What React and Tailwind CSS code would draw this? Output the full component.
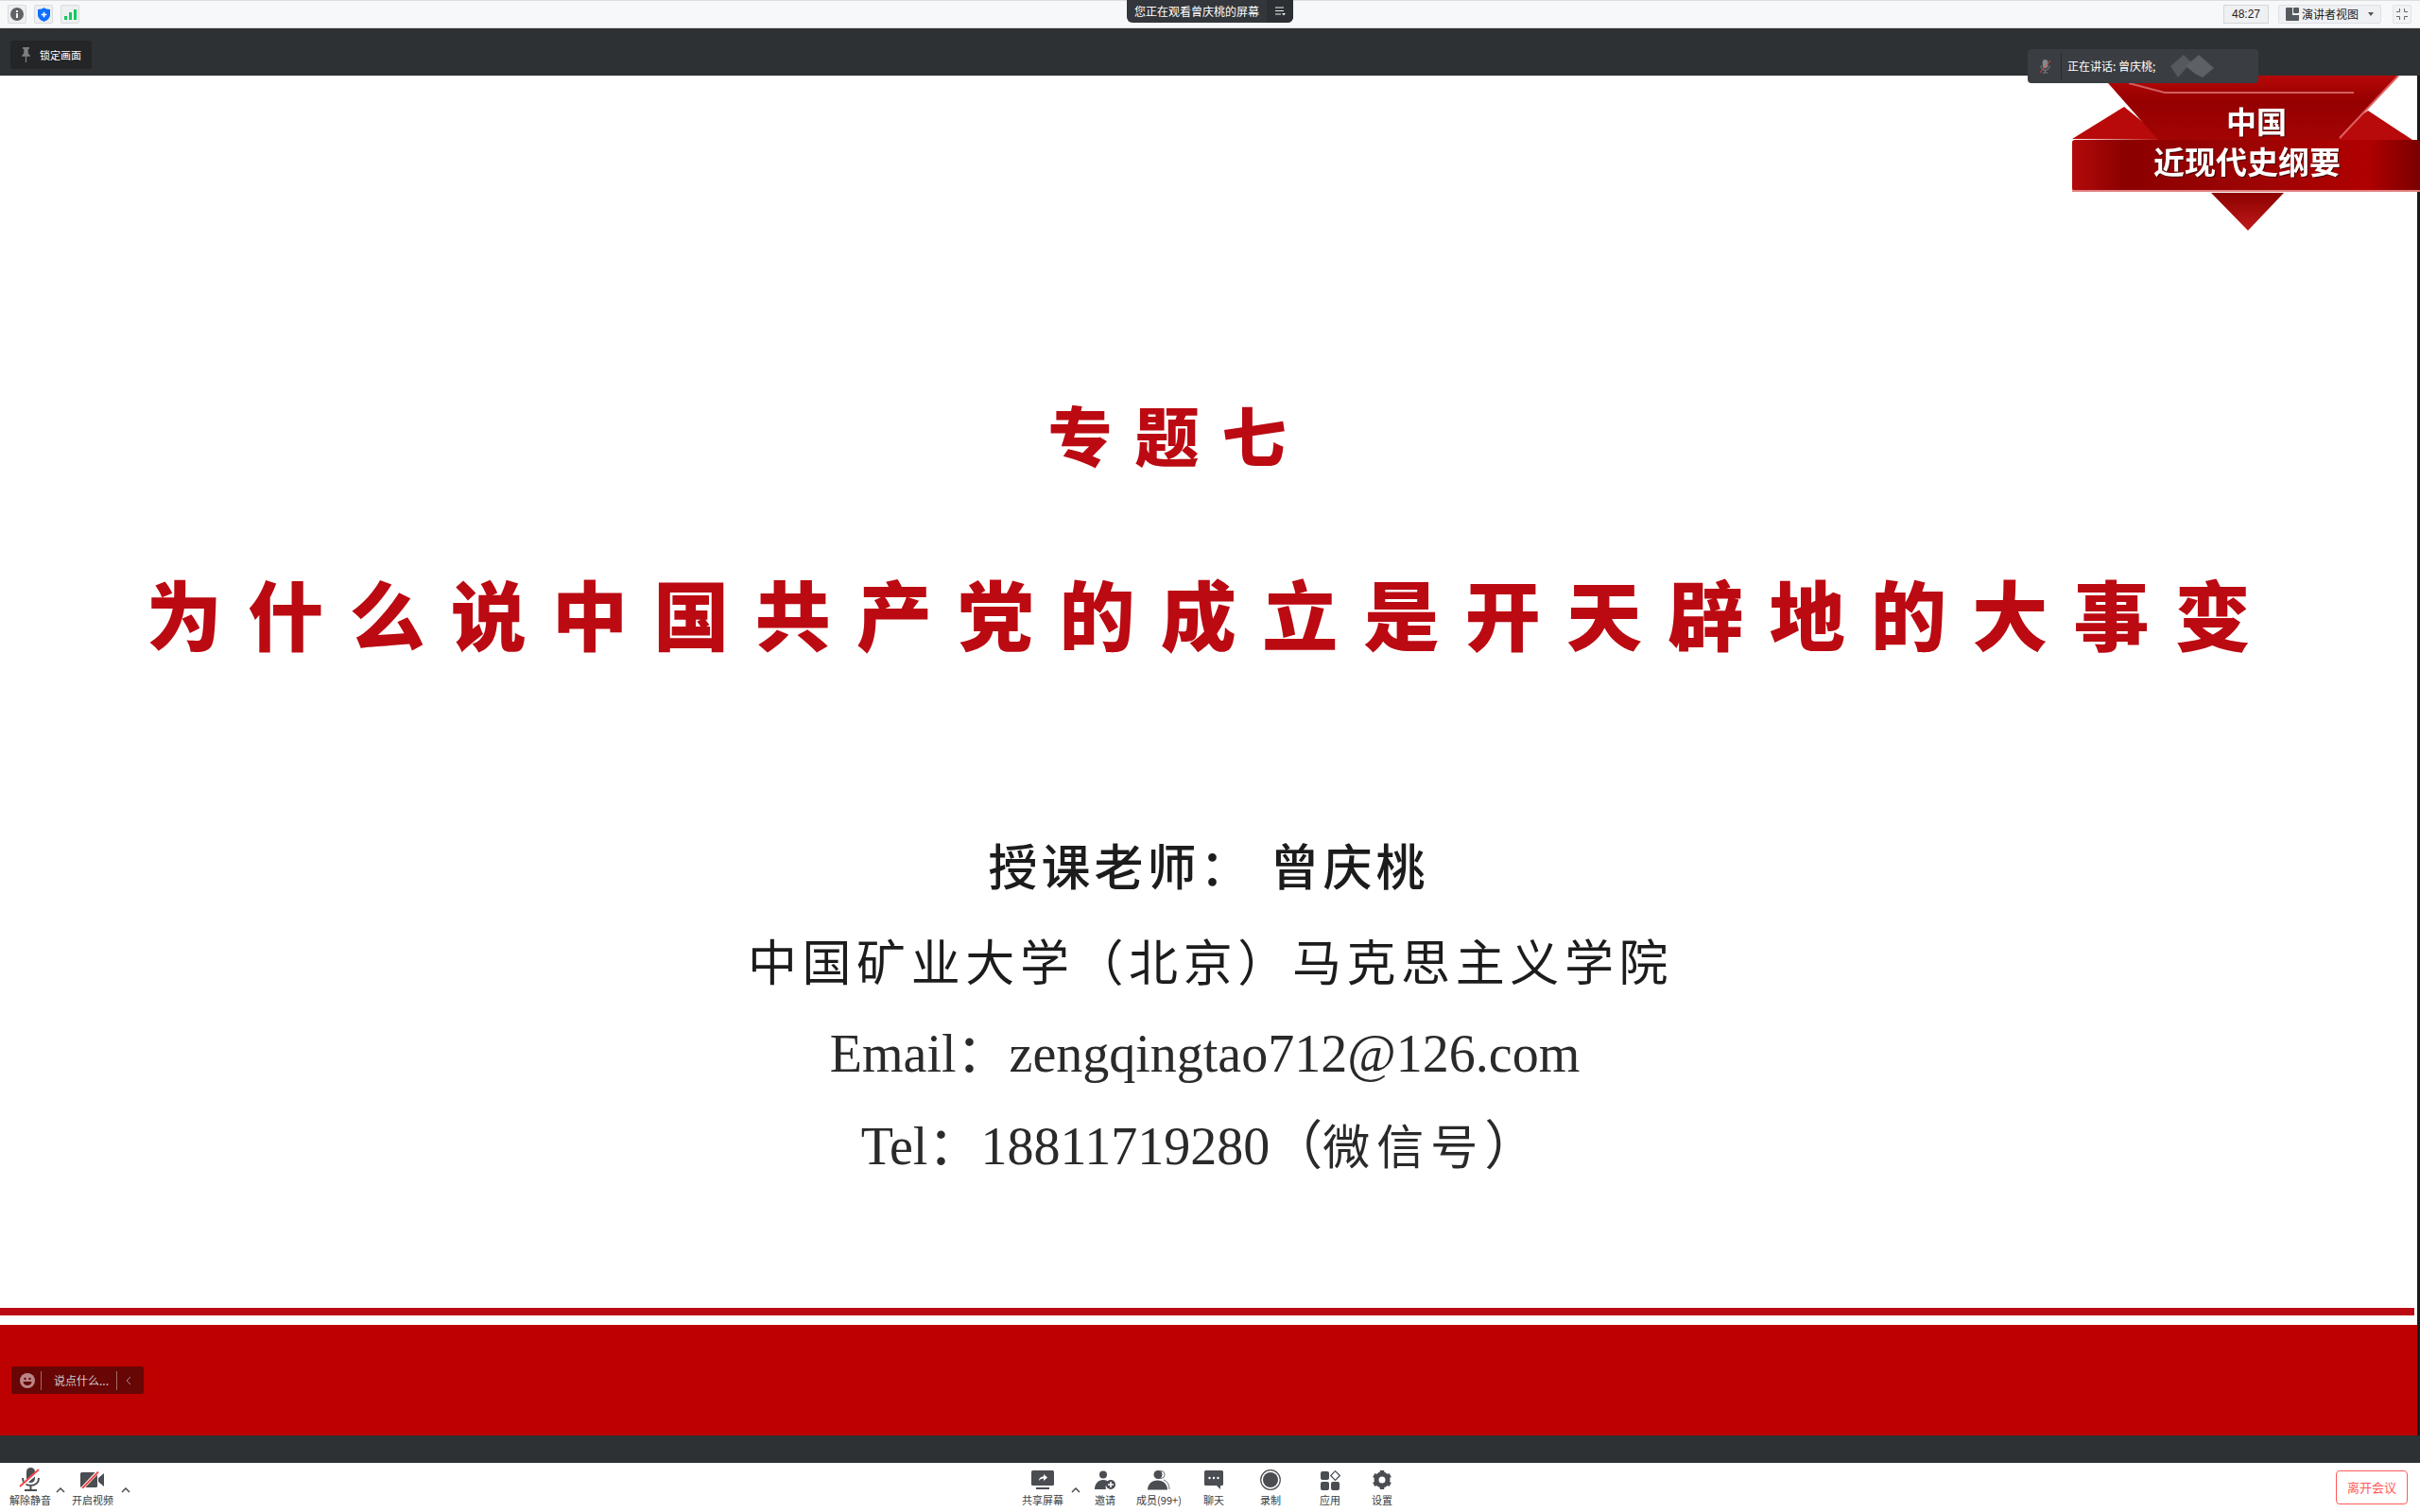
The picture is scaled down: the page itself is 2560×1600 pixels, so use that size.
import React from 'react';

const COLON = '\uFF1A';
const LP = '\uFF08';
const RP = '\uFF09';

const MicIcon = ({ className }) => (
  <svg viewBox="0 0 24 26" className={className}>
    <rect x="8" y="0" width="9" height="16" rx="4.5" fill="#4a4d52" />
    <path d="M4 11c0 5 3.5 8 8.500 8s8.500-3 8.500-8M12.500 19v4M6 24h13" stroke="#4a4d52" strokeWidth="2" fill="none" />
    <path d="M2 20 L22 3" stroke="#fff" strokeWidth="3.500" />
    <path d="M1 20 L21 2" stroke="#f24a4a" strokeWidth="2" />
  </svg>
);

const VideoIcon = ({ className }) => (
  <svg viewBox="0 0 26 18" className={className}>
    <rect x="0" y="1" width="18" height="16" rx="1.500" fill="#4a4d52" />
    <path d="M19 7l6-5v14l-6-5z" fill="#4a4d52" />
    <path d="M1 19 L19 0" stroke="#fff" strokeWidth="3.500" />
    <path d="M2 18 L19 0.500" stroke="#f24a4a" strokeWidth="2" />
  </svg>
);

const Chevron = () => (
  <svg viewBox="0 0 10 6" className="w-[10px] h-[6px]">
    <path d="M1 5l4-4 4 4" stroke="#4a4d52" strokeWidth="1.500" fill="none" />
  </svg>
);

const ShareIcon = () => (
  <svg viewBox="0 0 24 20" className="w-[24px] h-[20px]">
    <rect x="0" y="0" width="24" height="16" rx="1.500" fill="#4a4d52" />
    <rect x="5" y="18" width="14" height="2" fill="#4a4d52" />
    <path d="M8 11c0-3 2-4.500 5-4.500V4l4 3.500-4 3.500V8.500c-2 0-3.500 .7-5 2.500z" fill="#fff" />
  </svg>
);

const InviteIcon = () => (
  <svg viewBox="0 0 24 21" className="w-[24px] h-[21px]">
    <circle cx="10" cy="4.500" r="4" fill="#4a4d52" />
    <path d="M1 20c0-6 4-10 9-10 3 0 5 1 6 3-3 1-4 4-3 7z" fill="#4a4d52" />
    <circle cx="18" cy="15" r="5" fill="#4a4d52" />
    <path d="M18 12v6M15 15h6" stroke="#fff" strokeWidth="1.500" />
  </svg>
);

const MembersIcon = () => (
  <svg viewBox="0 0 24 21" className="w-[24px] h-[21px]">
    <circle cx="14" cy="4.500" r="4" fill="none" stroke="#4a4d52" strokeWidth="0.800" />
    <path d="M17 10c4 1.500 6 5 6 10" fill="none" stroke="#4a4d52" strokeWidth="0.800" />
    <circle cx="11" cy="4.500" r="4.500" fill="#4a4d52" />
    <path d="M0 20.500c0-6 4.500-10 10.500-10s10.500 4 10.500 10z" fill="#4a4d52" />
  </svg>
);

const ChatIcon = () => (
  <svg viewBox="0 0 20 20" className="w-[20px] h-[20px]">
    <path d="M1.500 0h17A1.500 1.500 0 0 1 20 1.500v13a1.500 1.500 0 0 1-1.500 1.500H17v4l-4-4H1.500A1.500 1.500 0 0 1 0 14.500v-13A1.500 1.500 0 0 1 1.500 0z" fill="#4a4d52" />
    <circle cx="5.500" cy="8" r="1.200" fill="#fff" />
    <circle cx="10" cy="8" r="1.200" fill="#fff" />
    <circle cx="14.500" cy="8" r="1.200" fill="#fff" />
  </svg>
);

const RecordIcon = () => (
  <svg viewBox="0 0 22 22" className="w-[22px] h-[22px]">
    <circle cx="11" cy="11" r="10.300" fill="none" stroke="#4a4d52" strokeWidth="1.200" />
    <circle cx="11" cy="11" r="8" fill="#4a4d52" />
  </svg>
);

const AppsIcon = () => (
  <svg viewBox="0 0 21 21" className="w-[21px] h-[21px]">
    <rect x="0" y="1" width="9" height="9" rx="2" fill="#4a4d52" />
    <rect x="0" y="12" width="9" height="9" rx="2" fill="#4a4d52" />
    <rect x="11" y="12" width="9" height="9" rx="2" fill="#4a4d52" />
    <path d="M15.500 0.700l4.800 4.800-4.800 4.800-4.800-4.800z" fill="none" stroke="#4a4d52" strokeWidth="1.200" />
  </svg>
);

const GearIcon = () => (
  <svg viewBox="0 0 22 22" className="w-[22px] h-[22px]">
    <circle cx="11" cy="11" r="6" fill="none" stroke="#4a4d52" strokeWidth="5" />
    <path d="M11 1v4M11 17v4M2.300 6l3.500 2M16.200 14l3.500 2M2.300 16l3.500-2M16.200 8l3.500-2" stroke="#4a4d52" strokeWidth="4.500" />
  </svg>
);

const ToolItem = ({ icon, label, width, chevron }) => (
  <div className={`relative flex flex-col items-center shrink-0 ${width}`}>
    <div className="h-[26px] flex items-center justify-center">{icon}</div>
    <span className="text-[11px] leading-[16px] text-[#3a3d42] whitespace-nowrap">{label}</span>
    {chevron && (
      <span className="absolute top-[21px] right-[-7px] flex">
        <Chevron />
      </span>
    )}
  </div>
);

const Banner = () => (
  <svg viewBox="0 0 370 170" className="w-[370px] h-[170px]">
    <defs>
      <linearGradient id="band" x1="0" x2="1" y1="0" y2="0">
        <stop offset="0" stopColor="#b30a0a" />
        <stop offset="0.15" stopColor="#8c0000" />
        <stop offset="0.5" stopColor="#9c0404" />
        <stop offset="0.85" stopColor="#b00000" />
        <stop offset="1" stopColor="#7a0000" />
      </linearGradient>
      <linearGradient id="top" x1="0" x2="0" y1="0" y2="1">
        <stop offset="0" stopColor="#b80808" />
        <stop offset="0.4" stopColor="#950000" />
        <stop offset="1" stopColor="#a30404" />
      </linearGradient>
      <linearGradient id="tail" x1="0" x2="0" y1="0" y2="1">
        <stop offset="0" stopColor="#8c0000" />
        <stop offset="1" stopColor="#c01a1a" />
      </linearGradient>
    </defs>
    <path d="M2 67 L57 33 L100 68z" fill="#b80a0a" />
    <path d="M368 72 L315 37 L270 68z" fill="#b80a0a" />
    <path d="M33 0 H347 L283 68 H93z" fill="url(#top)" />
    <path d="M62 8 L100 18 H300" stroke="#d06060" strokeWidth="2" fill="none" />
    <path d="M347 0 L285 66" stroke="#e06060" strokeWidth="2" />
    <rect x="2" y="68" width="368" height="54" rx="3" fill="url(#band)" />
    <rect x="2" y="121" width="368" height="2" fill="#e08080" />
    <path d="M149 124 H226 L188 164z" fill="url(#tail)" />
    <text x="197" y="61" textAnchor="middle" fontSize="32" fontWeight="700" fill="#fff" fontFamily="'Noto Sans CJK SC', sans-serif" className="[filter:drop-shadow(1px_1px_0_#440000)]">中国</text>
    <text x="187" y="104" textAnchor="middle" fontSize="33" fontWeight="700" fill="#fff" fontFamily="'Noto Sans CJK SC', sans-serif" className="[filter:drop-shadow(1px_1px_0_#440000)]">近现代史纲要</text>
  </svg>
);

export default function App() {
  return (
    <div className="relative w-[2560px] h-[1600px] overflow-hidden bg-white flex flex-col font-['Noto_Sans_CJK_SC',sans-serif]">
      {/* top status bar */}
      <div className="h-[30px] shrink-0 flex items-center pl-[8px] pr-[9px] bg-[#f7f8fa] border-t border-t-[#dddddd] border-b border-b-[#d8dadd]">
        <div className="flex gap-[8px]">
          <div className="w-[20px] h-[20px] rounded-[2px] border border-[#dcdcdc] bg-[#eeeff1] flex items-center justify-center">
            <svg viewBox="0 0 14 14" className="w-[14px] h-[14px]">
              <circle cx="7" cy="7" r="7" fill="#5f6266" />
              <rect x="6" y="6" width="2" height="5" fill="#eee" />
              <rect x="6" y="3" width="2" height="2" fill="#eee" />
            </svg>
          </div>
          <div className="w-[20px] h-[20px] rounded-[2px] border border-[#dcdcdc] bg-[#eeeff1] flex items-center justify-center">
            <svg viewBox="0 0 14 16" className="w-[13px] h-[15px]">
              <path d="M7 0c2 1.500 4 2 7 2v6c0 4-3 6.500-7 8-4-1.500-7-4-7-8V2c3 0 5-.5 7-2z" fill="#0f6fff" />
              <path d="M7 5v6M4 8h6" stroke="#fff" strokeWidth="1.800" />
            </svg>
          </div>
          <div className="w-[20px] h-[20px] rounded-[2px] border border-[#dcdcdc] bg-[#eeeff1] flex items-end justify-center gap-[2px] pb-[3px]">
            <span className="w-[3px] h-[4px] bg-[#12c95f]" />
            <span className="w-[3px] h-[8px] bg-[#12c95f]" />
            <span className="w-[3px] h-[11px] bg-[#12c95f]" />
          </div>
        </div>
        <div className="ml-auto flex items-center">
          <div className="w-[48px] h-[20px] border border-[#d4d6d9] bg-[#eff0f2] flex items-center justify-center text-[12px] text-[#222] font-['Liberation_Sans',sans-serif]">48:27</div>
          <div className="ml-[10px] w-[109px] h-[20px] rounded-[2px] border border-[#dfe1e4] bg-[#eff0f3] flex items-center pl-[7px] text-[12px] text-[#222]">
            <svg viewBox="0 0 14 14" className="w-[14px] h-[14px] mr-[3px]">
              <path d="M0 1a1 1 0 0 1 1-1h6v8h7v5a1 1 0 0 1-1 1H1a1 1 0 0 1-1-1z" fill="#55585c" />
              <rect x="8" y="0" width="6" height="6" rx="1" fill="#55585c" />
            </svg>
            演讲者视图
            <span className="ml-[10px] w-0 h-0 border-x-[3px] border-x-transparent border-t-[4px] border-t-[#555]" />
          </div>
          <div className="ml-[12px] w-[20px] h-[20px] rounded-[2px] border border-[#e2e3e6] bg-[#f1f2f4] flex items-center justify-center">
            <svg viewBox="0 0 14 14" className="w-[14px] h-[14px]">
              <path d="M4.500 1v3.500H1M9.500 1v3.500H13M4.500 13V9.500H1M9.500 13V9.500H13" stroke="#666" strokeWidth="1" fill="none" />
            </svg>
          </div>
        </div>
      </div>

      {/* dark bar above the shared screen */}
      <div className="h-[50px] shrink-0 bg-[#2e3134] flex items-center pl-[11px]">
        <div className="w-[86px] h-[30px] mt-[6px] rounded-[3px] bg-[#232527] flex items-center pl-[11px] text-[11px] text-white">
          <svg viewBox="0 0 12 18" className="w-[11px] h-[16px] mr-[9px]">
            <path d="M2 0h8v2H8.500v5L11 10v1H1v-1l2.500-3V2H2zM5.300 11h1.400v7H5.300z" fill="#7d7f82" />
          </svg>
          锁定画面
        </div>
      </div>

      {/* shared slide */}
      <div className="relative h-[1439px] shrink-0 bg-white flex flex-col items-center pt-[339px] border-r-[3px] border-r-[#1a1a1a]">
        <div className="h-[80px] leading-[80px] text-[68px] font-black text-[#bb0a12] tracking-[24px] whitespace-nowrap ml-[-64px]">专题七</div>
        <div className="mt-[108px] h-[80px] leading-[80px] text-[80px] font-black text-[#bb0a12] tracking-[27.300px] whitespace-nowrap ml-[6px]">为什么说中国共产党的成立是开天辟地的大事变</div>
        <div className="mt-[198px] h-[60px] leading-[60px] text-[52px] font-medium text-[#1c1c1c] tracking-[4px] whitespace-nowrap">授课老师{COLON}<span className="ml-[18px]">曾庆桃</span></div>
        <div className="mt-[41px] h-[60px] leading-[60px] text-[52px] text-[#1c1c1c] tracking-[5.600px] whitespace-nowrap ml-[4px]">中国矿业大学{LP}北京{RP}马克思主义学院</div>
        <div className="mt-[39px] h-[60px] leading-[60px] text-[56px] text-[#2a2a2a] whitespace-nowrap font-['Liberation_Serif','Noto_Sans_CJK_SC',serif] ml-[-8px]">Email{COLON}zengqingtao712@126.com</div>
        <div className="mt-[38px] h-[60px] leading-[60px] text-[56px] text-[#2a2a2a] whitespace-nowrap font-['Liberation_Serif','Noto_Sans_CJK_SC',serif] ml-[-20px]">Tel{COLON}18811719280{LP}<span className="text-[50px] tracking-[7px]">微信号</span>{RP}</div>

        <div className="mt-auto w-full flex flex-col">
          <div className="h-[8px] w-[2554px] bg-[#bb0a12]" />
          <div className="mt-[10px] h-[117px] bg-[#bd0000] flex items-center pl-[12px]">
            <div className="w-[140px] h-[29px] rounded-[2px] bg-[#680505] flex items-center text-[12px] text-[#cfcfcf]">
              <svg viewBox="0 0 16 16" className="w-[16px] h-[16px] ml-[9px]">
                <circle cx="8" cy="8" r="8" fill="#b98686" />
                <circle cx="5.500" cy="6" r="1.200" fill="#680505" />
                <circle cx="10.500" cy="6" r="1.200" fill="#680505" />
                <path d="M3.500 9h9c0 2.500-2 4-4.500 4s-4.500-1.500-4.500-4z" fill="#680505" />
              </svg>
              <span className="ml-[6px] w-px h-[20px] bg-[#a06a6a]" />
              <span className="ml-[13px] w-[66px] whitespace-nowrap">说点什么...</span>
              <span className="w-px h-[20px] bg-[#a06a6a]" />
              <svg viewBox="0 0 6 10" className="w-[6px] h-[10px] ml-[9px]">
                <path d="M5 1L1 5l4 4" stroke="#a88" strokeWidth="1" fill="none" />
              </svg>
            </div>
          </div>
        </div>

        <div className="absolute top-0 left-[2190px]">
          <Banner />
        </div>
      </div>

      {/* dark bar below the shared screen */}
      <div className="h-[29px] shrink-0 bg-[#2e3134]" />

      {/* meeting toolbar */}
      <div className="flex-1 bg-white grid grid-cols-[1fr_auto_1fr] items-center">
        <div className="flex pl-[2px]">
          <ToolItem width="w-[60px]" label="解除静音" chevron icon={<MicIcon className="w-[24px] h-[26px]" />} />
          <ToolItem width="w-[66px] ml-[3px]" label="开启视频" chevron icon={<VideoIcon className="w-[26px] h-[18px]" />} />
        </div>
        <div className="flex pr-[10px]">
          <ToolItem width="w-[66px]" label="共享屏幕" chevron icon={<ShareIcon />} />
          <ToolItem width="w-[66px]" label="邀请" icon={<InviteIcon />} />
          <ToolItem width="w-[48px]" label="成员(99+)" icon={<MembersIcon />} />
          <ToolItem width="w-[68px]" label="聊天" icon={<ChatIcon />} />
          <ToolItem width="w-[52px]" label="录制" icon={<RecordIcon />} />
          <ToolItem width="w-[74px]" label="应用" icon={<AppsIcon />} />
          <ToolItem width="w-[36px]" label="设置" icon={<GearIcon />} />
        </div>
        <div className="flex justify-end pr-[13px]">
          <div className="w-[76px] h-[36px] rounded-[4px] border border-[#ff5a5a] flex items-center justify-center text-[13px] text-[#ff5a5a]">离开会议</div>
        </div>
      </div>

      {/* floating hints */}
      <div className="absolute top-0 left-[1192px] w-[176px] h-[24px] rounded-b-[6px] bg-[#33363b] overflow-hidden flex items-center text-[12px] text-white">
        <span className="pl-[8px] w-[148px] whitespace-nowrap">您正在观看曾庆桃的屏幕</span>
        <span className="w-[28px] h-full bg-[#2c2f33] flex items-center justify-center">
          <svg viewBox="0 0 12 10" className="w-[12px] h-[10px]">
            <path d="M1 1h9M1 4.500h9M1 8h6" stroke="#eee" strokeWidth="1" />
            <path d="M8 7h4l-2 2.500z" fill="#eee" />
          </svg>
        </span>
      </div>

      <div className="absolute top-[52px] left-[2145px] w-[244px] h-[36px] rounded-[4px] bg-[#3a3d42] flex items-center text-[12px] text-white">
        <svg viewBox="0 0 14 16" className="w-[13px] h-[15px] ml-[12px]">
          <rect x="4" y="0" width="6" height="10" rx="3" fill="#85888c" />
          <path d="M2 7c0 3 2 5 5 5s5-2 5-5M7 12v2M4 15h6" stroke="#85888c" strokeWidth="1" fill="none" />
          <path d="M1 15L13 1" stroke="#f24a4a" strokeWidth="1" />
        </svg>
        <span className="ml-[10px] w-px h-[28px] bg-[#2a2c30]" />
        <span className="ml-[6px] whitespace-nowrap">正在讲话: 曾庆桃;</span>
        <svg viewBox="0 0 46 24" className="w-[46px] h-[24px] ml-[16px]">
          <path d="M0 12L14 0l8 8-14 16z" fill="#55585c" />
          <path d="M16 12L30 0l16 14-12 10-8-4z" fill="#5d6064" />
        </svg>
      </div>
    </div>
  );
}
